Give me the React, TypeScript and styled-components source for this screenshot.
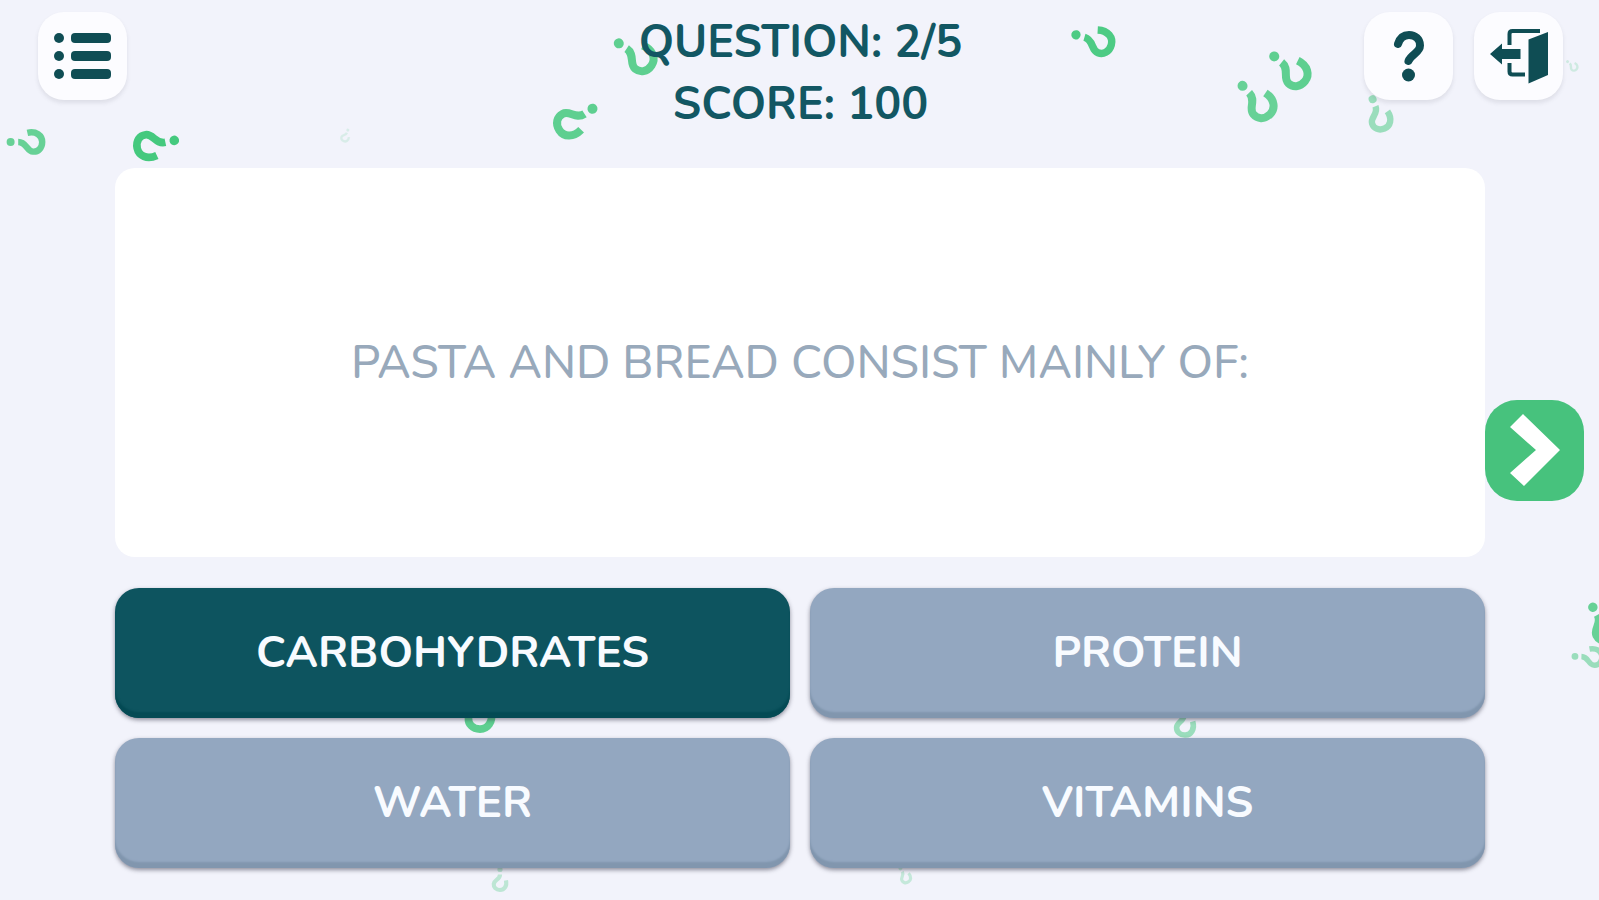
import React, { useState } from "react";
import styled, { createGlobalStyle } from "styled-components";

const GlobalStyle = createGlobalStyle`
  *, *::before, *::after { box-sizing: border-box; }
  body {
    margin: 0;
    background: #f2f3fb;
    font-family: Nunito, Lato, "Open Sans", sans-serif;
  }
`;

const Page = styled.main`
  position: relative;
  display: grid;
  grid-template-columns: 115px minmax(0, 1fr) 114px;
  grid-template-rows: 168px minmax(240px, 1fr) auto;
  min-height: 100vh;
  padding-bottom: 32px;
  overflow: hidden;
`;

const Backdrop = styled.svg`
  position: absolute;
  inset: 0;
  width: 100%;
  height: 100%;
  pointer-events: none;
`;

const Header = styled.header`
  position: relative;
  grid-column: 1 / -1;
  grid-row: 1;
  display: grid;
  grid-template-columns: 1fr auto 1fr;
  align-items: start;
  padding: 12px 36px 0 38px;
`;

const Tools = styled.div`
  display: flex;
  gap: 21px;
  justify-content: flex-end;
`;

const ToolButton = styled.button`
  display: grid;
  place-items: center;
  width: 89px;
  height: 88px;
  padding: 0;
  border: 0;
  border-radius: 26px;
  background: #fcfcff;
  box-shadow: 0 3px 4px rgba(70, 70, 90, 0.12);
  color: #0f4d54;
  cursor: pointer;
`;

const Status = styled.div`
  color: #125763;
  font-size: 45px;
  font-weight: 700;
  line-height: 62px;
  text-align: center;

  p { margin: 0; }
`;

const QuestionCard = styled.section`
  position: relative;
  grid-column: 2;
  grid-row: 2;
  display: grid;
  place-items: center;
  padding: 24px;
  border-radius: 20px;
  background: #fff;
`;

const QuestionText = styled.h1`
  margin: 0;
  color: #98a9bb;
  font-size: 46px;
  font-weight: 500;
  line-height: 62px;
  text-align: center;
`;

const Answers = styled.div`
  position: relative;
  grid-column: 2;
  grid-row: 3;
  display: grid;
  grid-template-columns: 1fr 1fr;
  gap: 20px;
  padding-top: 31px;
`;

const AnswerButton = styled.button<{ $selected: boolean }>`
  height: 130px;
  padding: 0 16px;
  border: 0;
  border-radius: 24px;
  background: ${(p) => (p.$selected ? "#0d545f" : "#93a7c0")};
  box-shadow:
    inset 0 -6px 2px ${(p) => (p.$selected ? "#044a54" : "#8196ae")},
    0 2px 4px rgba(40, 40, 60, 0.5);
  color: #f8fbff;
  font-family: inherit;
  font-size: 44px;
  font-weight: 700;
  line-height: 62px;
  cursor: pointer;
`;

const NextButton = styled.button`
  position: relative;
  grid-column: 3;
  grid-row: 1 / -1;
  place-self: center start;
  display: grid;
  place-items: center;
  width: 99px;
  height: 101px;
  margin-top: 32px;
  padding: 0;
  border: 0;
  border-radius: 32px;
  background: #47c27d;
  cursor: pointer;
`;

type MarkSpec = { x: number; y: number; turn: number; size: number; fade: number };

const marks: MarkSpec[] = [
  { x: 33, y: 142, turn: 90, size: 0.8, fade: 0.8 },
  { x: 148, y: 146, turn: -102, size: 0.96, fade: 1 },
  { x: 345, y: 138, turn: 200, size: 0.3, fade: 0.14 },
  { x: 569, y: 124, turn: -123, size: 1, fade: 0.85 },
  { x: 642, y: 59, turn: 124, size: 1, fade: 0.85 },
  { x: 1101, y: 42, turn: 106, size: 0.93, fade: 0.95 },
  { x: 1296, y: 74, turn: 129, size: 1, fade: 0.85 },
  { x: 1262, y: 106, turn: 136, size: 1, fade: 0.8 },
  { x: 1381, y: 120, turn: 158, size: 0.8, fade: 0.5 },
  { x: 1574, y: 67, turn: 130, size: 0.3, fade: 0.2 },
  { x: 1606, y: 630, turn: 150, size: 0.94, fade: 0.8 },
  { x: 1594, y: 657, turn: 92, size: 0.68, fade: 0.5 },
  { x: 480, y: 718, turn: 180, size: 0.96, fade: 0.85 },
  { x: 1185, y: 727, turn: 176, size: 0.7, fade: 0.5 },
  { x: 500, y: 884, turn: 180, size: 0.52, fade: 0.3 },
  { x: 906, y: 878, turn: 150, size: 0.4, fade: 0.26 },
];

function FloatingMarks() {
  return (
    <Backdrop viewBox="0 0 1599 900" preserveAspectRatio="xMidYMid slice" aria-hidden="true">
      {marks.map((m) => (
        <g
          key={`${m.x}-${m.y}`}
          transform={`translate(${m.x} ${m.y}) rotate(${m.turn}) scale(${m.size})`}
          opacity={m.fade}
        >
          <path
            d="M-11.500 7C-14 -4 -8 -11.500 0 -11.500C8 -11.500 12.500 -6 12 0C11.500 8 0 8 0 18.500"
            fill="none"
            stroke="#45c97e"
            strokeWidth="8"
          />
          <circle cx="0" cy="28" r="5" fill="#45c97e" />
        </g>
      ))}
    </Backdrop>
  );
}

function ListIcon() {
  return (
    <svg width="57" height="48" viewBox="0 0 57 48" fill="currentColor" aria-hidden="true">
      {[5, 23, 41].map((y) => (
        <React.Fragment key={y}>
          <circle cx="5" cy={y + 1} r="5" />
          <rect x="17" y={y - 4} width="40" height="10" rx="4" />
        </React.Fragment>
      ))}
    </svg>
  );
}

function HelpIcon() {
  return (
    <svg width="32" height="52" viewBox="0 0 32 52" aria-hidden="true">
      <path
        d="M5 14C7 7.500 11 5 16 5C22 5 27 9 27 15.500C27 23 18 24 15.500 31"
        fill="none"
        stroke="currentColor"
        strokeWidth="8"
        strokeLinecap="round"
      />
      <circle cx="15.500" cy="45" r="6.500" fill="currentColor" />
    </svg>
  );
}

function ExitIcon() {
  return (
    <svg width="60" height="56" viewBox="0 0 60 56" aria-hidden="true">
      <path
        d="M20.500 17V6Q20.500 3 23.500 3H51M20.500 35V43.500Q20.500 46.500 23.500 46.500H36"
        fill="none"
        stroke="currentColor"
        strokeWidth="4"
      />
      <path d="M39.500 11.500L59 4V47L39.500 55.500Z" fill="currentColor" />
      <path d="M1 26L13 15.500V21H31.500V31H13V36.500Z" fill="currentColor" />
    </svg>
  );
}

function ChevronIcon() {
  return (
    <svg width="50" height="74" viewBox="0 0 50 74" aria-hidden="true">
      <path d="M13 1L50 37L14 73L0 60L26 37L0 14Z" fill="#fff" />
    </svg>
  );
}

const choices = ["CARBOHYDRATES", "PROTEIN", "WATER", "VITAMINS"];

export default function App() {
  const [selected, setSelected] = useState(choices[0]);

  return (
    <>
      <GlobalStyle />
      <Page>
        <FloatingMarks />
        <Header>
          <ToolButton type="button" aria-label="Question list">
            <ListIcon />
          </ToolButton>
          <Status>
            <p>QUESTION: 2/5</p>
            <p>SCORE: 100</p>
          </Status>
          <Tools>
            <ToolButton type="button" aria-label="Help">
              <HelpIcon />
            </ToolButton>
            <ToolButton type="button" aria-label="Exit">
              <ExitIcon />
            </ToolButton>
          </Tools>
        </Header>
        <QuestionCard>
          <QuestionText>PASTA AND BREAD CONSIST MAINLY OF:</QuestionText>
        </QuestionCard>
        <Answers>
          {choices.map((choice) => (
            <AnswerButton
              key={choice}
              type="button"
              $selected={choice === selected}
              aria-pressed={choice === selected}
              onClick={() => setSelected(choice)}
            >
              {choice}
            </AnswerButton>
          ))}
        </Answers>
        <NextButton type="button" aria-label="Next question">
          <ChevronIcon />
        </NextButton>
      </Page>
    </>
  );
}
